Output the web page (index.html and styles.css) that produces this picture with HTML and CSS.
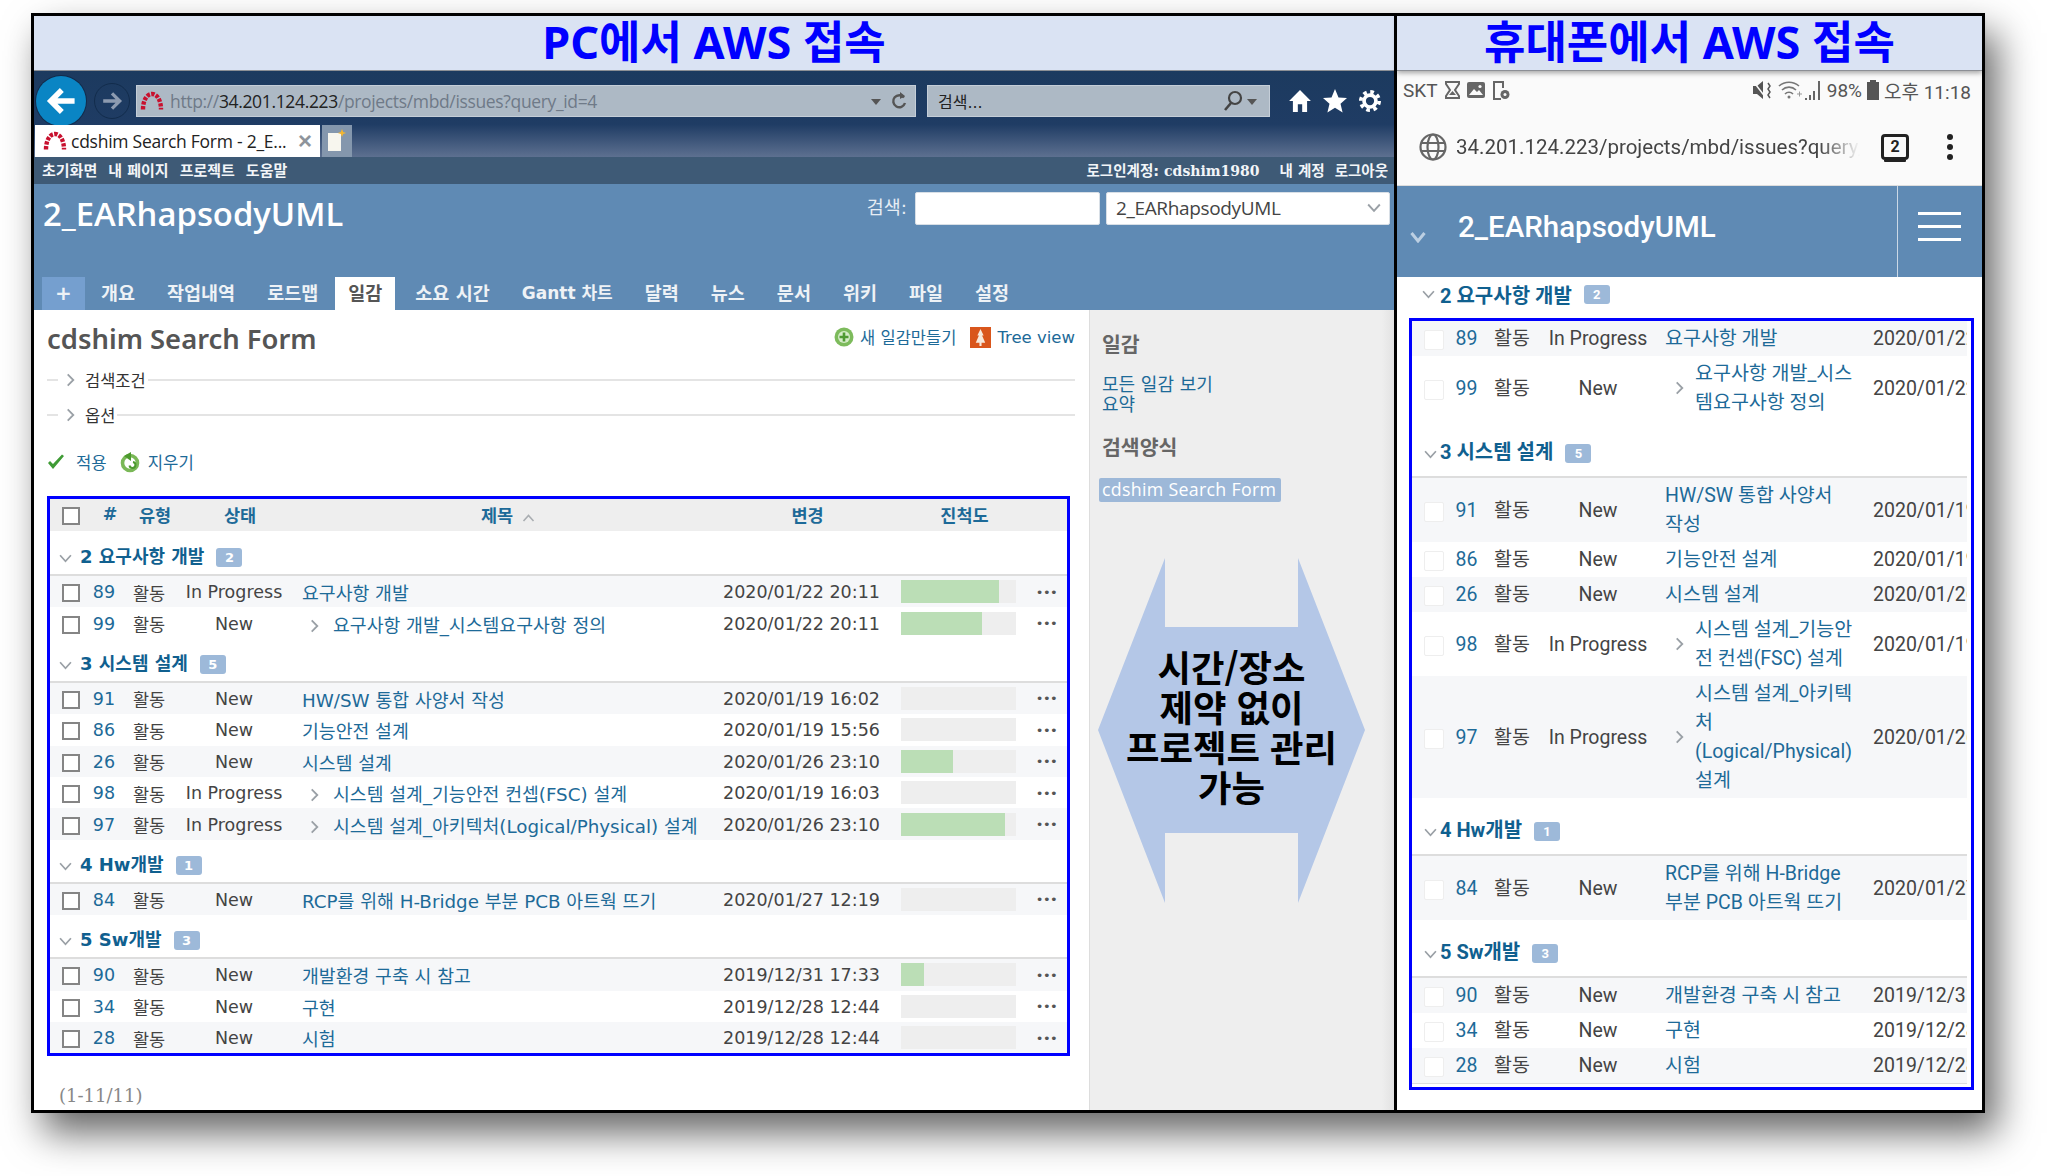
FILE: index.html
```html
<!DOCTYPE html>
<html lang="ko">
<head>
  <meta charset="UTF-8" />
  <title>PC / 휴대폰에서 AWS 접속</title>
  <link rel="stylesheet" href="styles.css">
</head>
<body>

<svg class="defs">
  <symbol id="down" viewBox="0 0 12 8"><path d="M1 1l5 5.5L11 1" fill="none" stroke="#9aa0a6" stroke-width="1.6"/></symbol>
  <symbol id="right" viewBox="0 0 8 12"><path d="M1.5 1L6.5 6l-5 5" fill="none" stroke="#9aa0a6" stroke-width="1.6"/></symbol>
  <symbol id="redmine" viewBox="0 0 24 20"><path d="M3 18.5C3 9 7 3 12 3s9 6 9 15.5" fill="none" stroke="#c8102e" stroke-width="4.4" stroke-dasharray="3.4 1.3"/></symbol>
</svg>

<div class="frame">

  <!-- PC browser -->
  <section class="pc">
    <div class="band">PC에서 AWS 접속</div>

    <div class="chrome">
      <div class="nav-row">
        <span class="back"><svg width="34" height="34" viewBox="0 0 40 40"><path d="M21 7L8 20l13 13M9 20h27" fill="none" stroke="#fff" stroke-width="6.5"/></svg></span>
        <span class="forward"><svg width="22" height="22" viewBox="0 0 40 40"><path d="M20 6l14 14-14 14M32 20H4" fill="none" stroke="#8d9bb0" stroke-width="6"/></svg></span>
        <div class="addr">
          <svg class="fav" width="24" height="20"><use href="#redmine"/></svg>
          <span class="url">http://<b>34.201.124.223</b>/projects/mbd/issues?query_id=4</span>
          <i class="caret"></i>
          <svg width="16" height="20" viewBox="0 0 16 20"><path d="M13 6.5A6 6 0 1 0 14 12" fill="none" stroke="#555" stroke-width="2.4"/><path d="M9 1l5 4-5 3z" fill="#555"/></svg>
        </div>
        <div class="search">
          <span class="search-text">검색...</span>
          <svg width="20" height="22" viewBox="0 0 20 22"><circle cx="12" cy="8" r="6" fill="none" stroke="#444" stroke-width="2.2"/><path d="M8 13l-6 7" stroke="#444" stroke-width="2.6"/></svg>
          <i class="caret"></i>
        </div>
        <div class="tools">
          <svg width="22" height="24" viewBox="0 0 20 22"><path d="M10 1L0 11h3.500v10H8v-7h4v7h4.500V11H20z" fill="#fff"/></svg>
          <svg width="24" height="24" viewBox="0 0 24 24"><path d="M12 0l3.500 8.500 8.500.6-6.500 5.700 2.100 8.700L12 18.800 4.400 23.500l2.100-8.700L0 9.100l8.500-.6z" fill="#fff"/></svg>
          <svg width="22" height="24" viewBox="0 0 24 24"><circle cx="12" cy="12" r="6.500" fill="none" stroke="#fff" stroke-width="4"/><circle cx="12" cy="12" r="10" fill="none" stroke="#fff" stroke-width="4" stroke-dasharray="4 3.850"/></svg>
        </div>
      </div>
      <div class="tab-row">
        <div class="tab">
          <svg width="24" height="20"><use href="#redmine"/></svg>
          <span class="tab-title">cdshim Search Form - 2_E...</span>
          <span class="tab-x">×</span>
        </div>
        <div class="tab-new"><svg width="20" height="24" viewBox="0 0 20 24"><path d="M1 4h13v18H1z" fill="#f7f6ee"/><path d="M15 0l1.200 3 3 1-3 1-1.200 3-1.200-3-3-1 3-1z" fill="#f2b632"/></svg></div>
      </div>
    </div>

    <div class="menubar">
      <div class="menu-group top-left"><span>초기화면</span><span>내 페이지</span><span>프로젝트</span><span>도움말</span></div>
      <div class="menu-group"><span>로그인계정: <b class="user">cdshim1980</b></span><span class="gap">내 계정</span><span>로그아웃</span></div>
    </div>

    <header class="hdr">
      <div class="hdr-top">
        <h1>2_EARhapsodyUML</h1>
        <div class="quick">
          <label>검색:</label>
          <span class="q-input"></span>
          <span class="q-select">2_EARhapsodyUML<svg width="14" height="10"><use href="#down"/></svg></span>
        </div>
      </div>
      <nav class="tabs">
        <a class="plus">+</a><a>개요</a><a>작업내역</a><a>로드맵</a><a class="on">일감</a><a>소요 시간</a><a class="gantt">Gantt 차트</a><a>달력</a><a>뉴스</a><a>문서</a><a>위키</a><a>파일</a><a>설정</a>
      </nav>
    </header>

    <div class="body-row">
      <main class="main">
        <div class="title-row">
          <h2>cdshim Search Form</h2>
          <div class="contextual">
            <svg width="20" height="20" viewBox="0 0 20 20"><circle cx="10" cy="10" r="9.500" fill="#7dbb5c"/><circle cx="10" cy="10" r="6" fill="#d5ecc8"/><path d="M10 5.500v9M5.500 10h9" stroke="#4f9a33" stroke-width="2.600"/></svg>
            <a>새 일감만들기</a>
            <svg class="tree" width="21" height="21" viewBox="0 0 20 20"><path d="M0 0h20v20H0z" fill="#d9561c"/><path d="M10 2l3 6h-1.500l3 7H11v3H9v-3H5.500l3-7H7z" fill="#f7e9dc"/></svg>
            <a>Tree view</a>
          </div>
        </div>

        <div class="fold"><i></i><svg width="9" height="14"><use href="#right"/></svg><span>검색조건</span><hr></div>
        <div class="fold"><i></i><svg width="9" height="14"><use href="#right"/></svg><span>옵션</span><hr></div>

        <div class="actions">
          <svg width="18" height="16" viewBox="0 0 18 16"><path d="M1 9l5 6L17 2l-2-1.500L6 10 3 7z" fill="#3f9b35"/></svg>
          <a>적용</a>
          <svg class="clear" width="20" height="22" viewBox="0 0 20 22"><circle cx="10" cy="12" r="7.500" fill="none" stroke="#7ab857" stroke-width="3.600"/><path d="M11 1v9L4 5z" fill="#4d9a2e"/><path d="M13 11a3 3 0 1 1-3.500 3.500" fill="none" stroke="#4d9a2e" stroke-width="2"/></svg>
          <a>지우기</a>
        </div>

        <div class="box">
          <table class="list">
            <colgroup><col class="w-cb"><col class="w-id"><col class="w-type"><col class="w-status"><col class="w-title"><col class="w-date"><col class="w-bar"><col class="w-more"></colgroup>
            <thead>
              <tr><th class="th-cb"><input type="checkbox" class="cb"></th><th>#</th><th>유형</th><th>상태</th><th class="sort">제목<svg width="13" height="8" viewBox="0 0 12 8"><path d="M1 7l5-5.500L11 7" fill="none" stroke="#a9adb1" stroke-width="1.600"/></svg></th><th>변경</th><th>진척도</th><th></th></tr>
            </thead>
            <tbody>
              <tr class="group first"><td colspan="8"><svg width="13" height="9"><use href="#down"/></svg><b>2 요구사항 개발</b><span class="badge">2</span></td></tr>
              <tr class="odd"><td><input type="checkbox" class="cb"></td><td class="id">89</td><td>활동</td><td>In Progress</td><td class="title"><a>요구사항 개발</a></td><td>2020/01/22 20:11</td><td><div class="bar"><div class="fill" style="width:85%"></div></div></td><td class="more">•••</td></tr>
              <tr><td><input type="checkbox" class="cb"></td><td class="id">99</td><td>활동</td><td>New</td><td class="title sub"><svg width="9" height="14"><use href="#right"/></svg><a>요구사항 개발_시스템요구사항 정의</a></td><td>2020/01/22 20:11</td><td><div class="bar"><div class="fill" style="width:70%"></div></div></td><td class="more">•••</td></tr>

              <tr class="group"><td colspan="8"><svg width="13" height="9"><use href="#down"/></svg><b>3 시스템 설계</b><span class="badge">5</span></td></tr>
              <tr class="odd"><td><input type="checkbox" class="cb"></td><td class="id">91</td><td>활동</td><td>New</td><td class="title"><a>HW/SW 통합 사양서 작성</a></td><td>2020/01/19 16:02</td><td><div class="bar"></div></td><td class="more">•••</td></tr>
              <tr><td><input type="checkbox" class="cb"></td><td class="id">86</td><td>활동</td><td>New</td><td class="title"><a>기능안전 설계</a></td><td>2020/01/19 15:56</td><td><div class="bar"></div></td><td class="more">•••</td></tr>
              <tr class="odd"><td><input type="checkbox" class="cb"></td><td class="id">26</td><td>활동</td><td>New</td><td class="title"><a>시스템 설계</a></td><td>2020/01/26 23:10</td><td><div class="bar"><div class="fill" style="width:45%"></div></div></td><td class="more">•••</td></tr>
              <tr><td><input type="checkbox" class="cb"></td><td class="id">98</td><td>활동</td><td>In Progress</td><td class="title sub"><svg width="9" height="14"><use href="#right"/></svg><a>시스템 설계_기능안전 컨셉(FSC) 설계</a></td><td>2020/01/19 16:03</td><td><div class="bar"></div></td><td class="more">•••</td></tr>
              <tr class="odd"><td><input type="checkbox" class="cb"></td><td class="id">97</td><td>활동</td><td>In Progress</td><td class="title sub"><svg width="9" height="14"><use href="#right"/></svg><a>시스템 설계_아키텍처(Logical/Physical) 설계</a></td><td>2020/01/26 23:10</td><td><div class="bar"><div class="fill" style="width:90%"></div></div></td><td class="more">•••</td></tr>

              <tr class="group"><td colspan="8"><svg width="13" height="9"><use href="#down"/></svg><b>4 Hw개발</b><span class="badge">1</span></td></tr>
              <tr class="odd"><td><input type="checkbox" class="cb"></td><td class="id">84</td><td>활동</td><td>New</td><td class="title"><a>RCP를 위해 H-Bridge 부분 PCB 아트웍 뜨기</a></td><td>2020/01/27 12:19</td><td><div class="bar"></div></td><td class="more">•••</td></tr>

              <tr class="group"><td colspan="8"><svg width="13" height="9"><use href="#down"/></svg><b>5 Sw개발</b><span class="badge">3</span></td></tr>
              <tr class="odd"><td><input type="checkbox" class="cb"></td><td class="id">90</td><td>활동</td><td>New</td><td class="title"><a>개발환경 구축 시 참고</a></td><td>2019/12/31 17:33</td><td><div class="bar"><div class="fill" style="width:20%"></div></div></td><td class="more">•••</td></tr>
              <tr><td><input type="checkbox" class="cb"></td><td class="id">34</td><td>활동</td><td>New</td><td class="title"><a>구현</a></td><td>2019/12/28 12:44</td><td><div class="bar"></div></td><td class="more">•••</td></tr>
              <tr class="odd"><td><input type="checkbox" class="cb"></td><td class="id">28</td><td>활동</td><td>New</td><td class="title"><a>시험</a></td><td>2019/12/28 12:44</td><td><div class="bar"></div></td><td class="more">•••</td></tr>
            </tbody>
          </table>
        </div>

        <div class="pager">(1-11/11)</div>
      </main>

      <aside class="side">
        <h3>일감</h3>
        <a>모든 일감 보기</a>
        <a>요약</a>
        <h3 class="second">검색양식</h3>
        <a class="selected">cdshim Search Form</a>
      </aside>
    </div>

    <!-- callout over the page -->
    <div class="callout">
      <svg width="267" height="345" viewBox="0 0 267 345"><path d="M67 0v69h133V0l67 172-67 173v-70H67v70L0 172z" fill="#b4c7e7"/></svg>
      <p>시간/장소<br>제약 없이<br>프로젝트 관리<br>가능</p>
    </div>
  </section>

  <!-- phone browser -->
  <section class="phone">
    <div class="band">휴대폰에서 AWS 접속</div>

    <div class="statusbar">
      <div class="st-left">
        <span>SKT</span>
        <svg width="15" height="18" viewBox="0 0 15 18"><path d="M1 1h13v2l-4 6 4 6v2H1v-2l4-6-4-6z" fill="none" stroke="#666" stroke-width="2"/><path d="M4 14h7l-3.500-4z" fill="#666"/></svg>
        <svg width="18" height="16" viewBox="0 0 18 16"><rect x="0" y="0" width="18" height="16" rx="2" fill="#666"/><path d="M2 13l5-6 3 3 2-2 4 5z" fill="#fafafa"/><circle cx="13" cy="4.500" r="1.600" fill="#fafafa"/></svg>
        <svg width="18" height="19" viewBox="0 0 18 19"><path d="M9 18H2V1h9v6" fill="none" stroke="#666" stroke-width="2"/><circle cx="13" cy="13.500" r="4.500" fill="#666"/><circle cx="13" cy="13.500" r="1.500" fill="#fafafa"/></svg>
      </div>
      <div class="st-right">
        <svg width="20" height="20" viewBox="0 0 20 20"><path d="M0 6h4l6-5v18l-6-5H0z" fill="#555"/><path d="M0 1l13 17" stroke="#fafafa" stroke-width="1.500"/><path d="M15 3l2 3-2 3 2 3-2 3 2 3" fill="none" stroke="#555" stroke-width="1.500"/></svg>
        <svg width="24" height="20" viewBox="0 0 24 20"><path d="M1 6a15 15 0 0 1 20 0M4 10a10 10 0 0 1 14 0M7 14a5.500 5.500 0 0 1 8 0" fill="none" stroke="#777" stroke-width="1.600"/><circle cx="11" cy="17" r="1.500" fill="#777"/><path d="M19 14h5M21.500 11.500v5" stroke="#999"/></svg>
        <svg class="sig" width="18" height="20" viewBox="0 0 18 20"><path d="M1 18v2h2v-2zM5 15v5h2v-5zM9 11v9h2v-9zM14 1v19h2V1z" fill="#666"/></svg>
        <span>98%</span>
        <svg width="12" height="20" viewBox="0 0 12 20"><path d="M3 0h6v2h3v18H0V2h3z" fill="#555"/></svg>
        <span>오후 11:18</span>
      </div>
    </div>

    <div class="urlbar">
      <svg width="28" height="28" viewBox="0 0 28 28"><g fill="none" stroke="#666" stroke-width="2.200"><circle cx="14" cy="14" r="12.500"/><ellipse cx="14" cy="14" rx="5.500" ry="12.500"/><path d="M2 10h24M2 18h24"/></g></svg>
      <span class="m-url">34.201.124.223/projects/mbd/issues?query_id=4</span>
      <span class="counter">2</span>
      <span class="kebab"><i></i><i></i><i></i></span>
    </div>

    <header class="m-hdr">
      <div class="m-title">
        <svg width="16" height="11" viewBox="0 0 16 11"><path d="M1.500 1l6.500 8 6.500-8" fill="none" stroke="#bccfe2" stroke-width="3"/></svg>
        <h1>2_EARhapsodyUML</h1>
      </div>
      <div class="burger"><i></i><i></i><i></i></div>
    </header>

    <div class="m-body">
      <div class="m-first"><svg width="13" height="9"><use href="#down"/></svg><b>2 요구사항 개발</b><span class="badge">2</span></div>
      <div class="m-box">
        <table class="m-list">
          <colgroup><col class="m-cb"><col class="m-id"><col class="m-type"><col class="m-status"><col class="m-title-col"><col class="m-date"></colgroup>
          <tbody>
            <tr class="odd"><td><span class="m-check"></span></td><td class="id">89</td><td>활동</td><td>In Progress</td><td class="title"><a>요구사항 개발</a></td><td class="date">2020/01/22 20:11</td></tr>
            <tr><td><span class="m-check"></span></td><td class="id">99</td><td>활동</td><td>New</td><td class="title"><div class="m-sub"><svg width="9" height="14"><use href="#right"/></svg><a>요구사항 개발_시스템요구사항 정의</a></div></td><td class="date">2020/01/22 20:11</td></tr>

            <tr class="group"><td colspan="6"><svg width="13" height="9"><use href="#down"/></svg><b>3 시스템 설계</b><span class="badge">5</span></td></tr>
            <tr class="odd"><td><span class="m-check"></span></td><td class="id">91</td><td>활동</td><td>New</td><td class="title"><a>HW/SW 통합 사양서 작성</a></td><td class="date">2020/01/19 16:02</td></tr>
            <tr><td><span class="m-check"></span></td><td class="id">86</td><td>활동</td><td>New</td><td class="title"><a>기능안전 설계</a></td><td class="date">2020/01/19 15:56</td></tr>
            <tr class="odd"><td><span class="m-check"></span></td><td class="id">26</td><td>활동</td><td>New</td><td class="title"><a>시스템 설계</a></td><td class="date">2020/01/26 23:10</td></tr>
            <tr><td><span class="m-check"></span></td><td class="id">98</td><td>활동</td><td>In Progress</td><td class="title"><div class="m-sub"><svg width="9" height="14"><use href="#right"/></svg><a>시스템 설계_기능안전 컨셉(FSC) 설계</a></div></td><td class="date">2020/01/19 16:03</td></tr>
            <tr class="odd"><td><span class="m-check"></span></td><td class="id">97</td><td>활동</td><td>In Progress</td><td class="title"><div class="m-sub"><svg width="9" height="14"><use href="#right"/></svg><a>시스템 설계_아키텍처(Logical/Physical) 설계</a></div></td><td class="date">2020/01/26 23:10</td></tr>

            <tr class="group"><td colspan="6"><svg width="13" height="9"><use href="#down"/></svg><b>4 Hw개발</b><span class="badge">1</span></td></tr>
            <tr class="odd"><td><span class="m-check"></span></td><td class="id">84</td><td>활동</td><td>New</td><td class="title"><a>RCP를 위해 H-Bridge 부분 PCB 아트웍 뜨기</a></td><td class="date">2020/01/27 12:19</td></tr>

            <tr class="group"><td colspan="6"><svg width="13" height="9"><use href="#down"/></svg><b>5 Sw개발</b><span class="badge">3</span></td></tr>
            <tr class="odd"><td><span class="m-check"></span></td><td class="id">90</td><td>활동</td><td>New</td><td class="title"><a>개발환경 구축 시 참고</a></td><td class="date">2019/12/31 17:33</td></tr>
            <tr><td><span class="m-check"></span></td><td class="id">34</td><td>활동</td><td>New</td><td class="title"><a>구현</a></td><td class="date">2019/12/28 12:44</td></tr>
            <tr class="odd last"><td><span class="m-check"></span></td><td class="id">28</td><td>활동</td><td>New</td><td class="title"><a>시험</a></td><td class="date">2019/12/28 12:44</td></tr>
          </tbody>
        </table>
      </div>
    </div>
  </section>
</div>

</body>
</html>
```

FILE: styles.css
```css
:root {
  --blue: #5f8ab4;
  --link: #1d6a98;
  --badge: #9db9d9;
  --ko: "Noto Sans CJK KR";
}

html, body {
  margin: 0;
  padding: 0;
  background: #fff;
}

body {
  width: 2047px;
  height: 1176px;
  overflow: hidden;
  font-family: "DejaVu Sans", var(--ko), sans-serif;
  color: #333;
}

.defs {
  display: none;
}

.frame {
  box-sizing: border-box;
  width: 1954px;
  height: 1100px;
  margin: 13px 0 0 31px;
  border: 3px solid #000;
  display: flex;
  box-shadow: 12px 20px 36px rgba(0,0,0,0.6);
  background: #fff;
}

.pc {
  width: 1360px;
  display: flex;
  flex-direction: column;
  position: relative;
}

.phone {
  flex: 1;
  min-width: 0;
  border-left: 3px solid #000;
  display: flex;
  flex-direction: column;
}

.band {
  height: 55px;
  flex: none;
  background: #dae3f3;
  color: #00f;
  font: 700 45px/52px "Noto Sans", var(--ko), sans-serif;
  text-align: center;
  border-bottom: 1px solid #8c8f95;
  box-sizing: border-box;
}

/* IE chrome */
.chrome {
  height: 86px;
  flex: none;
  display: flex;
  flex-direction: column;
  background: linear-gradient(#1c3a5f 0, #1f3c64 62%, #5d7090 100%);
}

.nav-row {
  height: 54px;
  padding: 6px 0 0 2px;
  box-sizing: border-box;
  display: flex;
  align-items: center;
}

.back {
  flex: none;
  width: 50px;
  height: 50px;
  border-radius: 50%;
  background: #0a85c4;
  box-shadow: 0 0 0 1px #122c4c;
  display: flex;
  align-items: center;
  justify-content: center;
}

.forward {
  flex: none;
  width: 34px;
  height: 34px;
  margin-left: 8px;
  border-radius: 50%;
  border: 1px solid #122c4c;
  display: flex;
  align-items: center;
  justify-content: center;
}

.addr, .search {
  height: 32px;
  box-sizing: border-box;
  background: #adb9c5;
  border: 1px solid #c5ced8;
  display: flex;
  align-items: center;
  flex: none;
}

.addr {
  width: 780px;
  margin-left: 6px;
  padding: 0 8px 0 3px;
  gap: 6px;
}

.url {
  flex: 1;
  font: 17.5px "Open Sans", sans-serif;
  letter-spacing: -0.35px;
  color: #6f7a88;
}

.url b {
  font-weight: 400;
  color: #222;
}

.caret {
  width: 0;
  height: 0;
  border: 5px solid transparent;
  border-top: 6px solid #555;
  border-bottom: 0;
  margin: 2px 4px 0;
}

.search {
  width: 343px;
  margin-left: 11px;
  padding: 0 8px 0 10px;
}

.search-text {
  flex: 1;
  font-size: 16px;
  color: #222;
}

.tools {
  display: flex;
  align-items: center;
  gap: 12px;
  margin-left: 19px;
}

.tab-row {
  height: 32px;
  display: flex;
}

.tab {
  width: 285px;
  margin-left: 1px;
  background: #fff;
  display: flex;
  align-items: center;
  padding: 0 6px 0 8px;
  box-sizing: border-box;
  gap: 4px;
}

.tab-title {
  flex: 1;
  font: 17.5px "Open Sans", sans-serif;
  letter-spacing: -0.25px;
  color: #222;
  white-space: nowrap;
}

.tab-x {
  font: 700 24px/24px "Liberation Sans", sans-serif;
  color: #8e949b;
  margin-right: 2px;
}

.tab-new {
  width: 30px;
  margin-left: 2px;
  background: #8497ad;
  display: flex;
  align-items: center;
  justify-content: center;
}

.menubar {
  height: 27px;
  flex: none;
  box-sizing: border-box;
  background: #3e5a76;
  color: #f2f5f8;
  font-size: 14.5px;
  font-weight: 700;
  display: flex;
  justify-content: space-between;
  align-items: center;
  padding: 0 6px 3px 8px;
}

.menu-group {
  display: flex;
  gap: 10px;
}

.top-left {
  font-size: 15px;
  gap: 11px;
}

.menu-group .gap {
  margin-left: 10px;
}

.user {
  font-family: "DejaVu Serif", serif;
  font-size: 14px;
}

/* redmine header */
.hdr {
  height: 126px;
  flex: none;
  box-sizing: border-box;
  background: var(--blue);
  display: flex;
  flex-direction: column;
  justify-content: space-between;
}

.hdr-top {
  display: flex;
  justify-content: space-between;
  padding: 7px 4px 0 9px;
}

h1 {
  margin: 0;
  color: #fff;
  font: 600 32.8px/46px "Open Sans", sans-serif;
  letter-spacing: 0;
}

.quick {
  display: flex;
  align-items: flex-start;
  gap: 6px;
  padding-top: 1px;
}

.quick label {
  color: #e6edf4;
  font-size: 18.5px;
  line-height: 31px;
  margin-right: 2px;
}

.q-input, .q-select {
  height: 33px;
  box-sizing: border-box;
  background: #fff;
  border: 1px solid #d8dfe6;
  border-radius: 2px;
}

.q-input {
  width: 185px;
}

.q-select {
  width: 284px;
  padding: 0 8px 2px 9px;
  display: flex;
  align-items: center;
  justify-content: space-between;
  font: 19px "Open Sans", sans-serif;
  letter-spacing: -0.35px;
  color: #444;
}

.tabs {
  display: flex;
  height: 33px;
  padding-left: 8px;
  color: #eef2f6;
  font-size: 18.5px;
  font-weight: 700;
  line-height: 33px;
}

.tabs a {
  padding: 0 16px;
}

.tabs .gantt {
  font-size: 17px;
}

.tabs .plus {
  width: 43px;
  padding: 0;
  text-align: center;
  background: #759fcf;
  font-size: 20px;
}

.tabs .on {
  background: #fff;
  color: #555;
  margin: 0 4px 0 1px;
  padding: 0 13px;
}

/* page body */
.body-row {
  flex: 1;
  display: flex;
  min-height: 0;
}

.main {
  flex: 1;
  min-width: 0;
  padding: 0 14px 0 13px;
}

.title-row {
  height: 52px;
  box-sizing: border-box;
  padding-top: 5px;
  display: flex;
  justify-content: space-between;
  align-items: center;
}

h2 {
  margin: 0;
  font: 600 27.4px "Noto Sans", sans-serif;
  color: #555;
}

.contextual {
  display: flex;
  align-items: center;
  gap: 6px;
  color: var(--link);
  font-size: 16.5px;
  margin-top: -3px;
}

.contextual .tree {
  margin-left: 8px;
}

.fold {
  height: 35px;
  display: flex;
  align-items: center;
  font-size: 16.5px;
  color: #333;
}

.fold i {
  width: 11px;
  height: 2px;
  background: #e4e4e4;
  margin-right: 8px;
}

.fold span {
  margin: 0 2px 0 10px;
}

.fold hr {
  flex: 1;
  margin: 0;
  border: 0;
  height: 2px;
  background: #e4e4e4;
}

.actions {
  height: 36px;
  margin-top: 13px;
  padding-bottom: 2px;
  box-sizing: border-box;
  display: flex;
  align-items: center;
  color: var(--link);
  font-size: 16.7px;
  gap: 11px;
}

.actions .clear {
  margin-left: 2px;
  margin-right: -3px;
}

.box {
  width: 1023px;
  box-sizing: border-box;
  margin-top: 15px;
  border: 3px solid #00f;
}

table {
  border-spacing: 0;
  table-layout: fixed;
}

.list {
  width: 1017px;
  font-size: 17.5px;
  color: #444;
}

.w-cb { width: 36px; }
.w-id { width: 36px; }
.w-type { width: 54px; }
.w-status { width: 116px; }
.w-title { width: 420px; }
.w-date { width: 179px; }
.w-bar { width: 135px; }
.w-more { width: 41px; }

.list th {
  height: 32px;
  padding: 0 0 2px 12px;
  box-sizing: border-box;
  background: #eee;
  color: var(--link);
  font-size: 17.5px;
  font-weight: 700;
}

.list .th-cb {
  padding: 0;
}

.list th svg {
  margin-left: 9px;
}

.list td {
  padding: 1px 0 0;
  text-align: center;
  white-space: nowrap;
}

.list tbody tr {
  height: 31.4px;
}

.list tr.group {
  height: 44px;
}

.list tr.first {
  height: 45px;
}

.list .group td {
  text-align: left;
  padding: 4px 0 0 9px;
  border-bottom: 2px solid #ddd;
}

.list .group svg {
  margin-right: 8px;
}

.group b, .m-first b {
  color: #10608f;
  font-size: 18px;
}

.odd {
  background: #f6f7f9;
}

.cb {
  appearance: none;
  display: block;
  box-sizing: border-box;
  width: 18px;
  height: 18px;
  margin: 2px 0 0 12px;
  background: #fff;
  border: 2px solid #858585;
}

.id {
  color: var(--link);
}

.list .title {
  text-align: left;
  padding-left: 10px;
  color: var(--link);
  font-size: 18.3px;
}

.list .sub svg {
  margin: 0 14px 0 8px;
  vertical-align: -1px;
}

.bar {
  width: 115px;
  height: 23px;
  margin: -1px 0 0 10px;
  background: #eee;
}

.fill {
  height: 100%;
  background: #bbdeb6;
}

.more {
  font-size: 13px;
  letter-spacing: -0.5px;
  color: #555;
}

.badge {
  display: inline-block;
  margin-left: 12px;
  min-width: 26px;
  height: 19px;
  border-radius: 3px;
  background: var(--badge);
  color: #fff;
  font-size: 13px;
  font-weight: 700;
  line-height: 19px;
  text-align: center;
  vertical-align: 1px;
}

.pager {
  margin: 29px 0 0 12px;
  font: 18px/22px "DejaVu Serif", serif;
  color: #888;
}

/* sidebar */
.side {
  width: 305px;
  flex: none;
  box-sizing: border-box;
  background: linear-gradient(90deg, #eee 0, #eee 96%, #e2e2e2 100%);
  border-left: 1px solid #ddd;
  padding: 20px 0 0 12px;
  color: var(--link);
  font-size: 18px;
  line-height: 19.5px;
}

.side a {
  display: block;
}

.side h3 {
  margin: 0 0 15px;
  font-size: 20.5px;
  line-height: 30px;
  color: #666;
  font-weight: 700;
}

.side .second {
  margin: 19px 0 15px;
}

.side .selected {
  width: 182px;
  margin-left: -3px;
  padding-left: 3px;
  box-sizing: border-box;
  height: 24px;
  background: #9db8d8;
  color: #fff;
  border-radius: 2px;
  font: 17.8px/23px "Open Sans", sans-serif;
  letter-spacing: 0.3px;
}

.callout {
  position: absolute;
  left: 1064px;
  top: 542px;
  width: 267px;
  height: 345px;
}

.callout svg {
  display: block;
}

.callout p {
  position: absolute;
  inset: 0 0 10px 0;
  margin: 0;
  display: flex;
  align-items: center;
  justify-content: center;
  text-align: center;
  font: 700 36.4px/40px var(--ko), sans-serif;
  color: #000;
}

/* phone */
.phone .band {
  box-shadow: 0 2px 5px rgba(0,0,0,0.35);
  position: relative;
}

.statusbar, .urlbar {
  background: #fafafa;
  flex: none;
  display: flex;
  align-items: center;
  font-family: Roboto, var(--ko), sans-serif;
}

.statusbar {
  height: 38px;
  justify-content: space-between;
  padding: 0 11px 0 6px;
  color: #555;
  font-size: 19px;
}

.st-left, .st-right {
  display: flex;
  align-items: center;
  gap: 7px;
}

.st-right {
  gap: 5px;
}

.sig {
  margin-left: -3px;
}

.urlbar {
  height: 77px;
  padding-left: 22px;
  gap: 9px;
  border-bottom: 1px solid #ddd;
  box-sizing: border-box;
}

.m-url {
  width: 404px;
  overflow: hidden;
  white-space: nowrap;
  font-size: 20.5px;
  color: #444;
  -webkit-mask-image: linear-gradient(90deg, #000 90%, transparent 100%);
  mask-image: linear-gradient(90deg, #000 90%, transparent 100%);
}

.counter {
  width: 28px;
  height: 26px;
  margin-left: 12px;
  box-sizing: border-box;
  border: 3px solid #222;
  border-radius: 4px;
  text-align: center;
  font-size: 16px;
  font-weight: 700;
  line-height: 20px;
  color: #222;
  box-shadow: 0 5px 0 -3px #222;
}

.kebab {
  margin-left: 29px;
  display: flex;
  flex-direction: column;
  gap: 4px;
}

.kebab i {
  width: 6px;
  height: 6px;
  border-radius: 50%;
  background: #222;
}

.m-hdr {
  height: 91px;
  flex: none;
  background: var(--blue);
  display: flex;
}

.m-title {
  flex: 1;
  display: flex;
  align-items: center;
  padding-left: 13px;
}

.m-title svg {
  margin-top: 12px;
}

.m-title h1 {
  margin: -9px 0 0 32px;
  font: 500 29.5px/40px Roboto, sans-serif;
}

.burger {
  width: 85px;
  border-left: 1px solid #cbd8e6;
  display: flex;
  flex-direction: column;
  gap: 10px;
  padding: 26px 0 0 20px;
  box-sizing: border-box;
}

.burger i {
  width: 43px;
  height: 3px;
  background: #fff;
}

.m-body {
  flex: 1;
  background: #fff;
  font-family: Roboto, var(--ko), sans-serif;
}

.m-first {
  height: 41px;
  display: flex;
  align-items: center;
  padding: 0 0 6px 25px;
  box-sizing: border-box;
}

.m-first svg {
  margin-right: 5px;
}

.m-first b {
  font-size: 20px;
}

.m-box {
  width: 565px;
  height: 772px;
  margin-left: 12px;
  box-sizing: border-box;
  border: 3px solid #00f;
}

.m-list {
  width: 555px;
  font-size: 19.5px;
  line-height: 29px;
  color: #444;
}

.m-cb { width: 38px; }
.m-id { width: 33px; }
.m-type { width: 58px; }
.m-status { width: 114px; }
.m-title-col { width: 208px; }
.m-date { width: 104px; }

.m-list td {
  padding: 3px 0;
  text-align: center;
  white-space: nowrap;
}

.m-list .title {
  padding-left: 10px;
  padding-right: 10px;
  text-align: left;
  white-space: normal;
  color: var(--link);
}

.m-list .date {
  padding-left: 10px;
  text-align: left;
  overflow: hidden;
}

.m-sub {
  display: flex;
  align-items: center;
  margin-right: -10px;
}

.m-sub svg {
  flex: none;
  margin: 0 11px 0 10px;
}

.m-check {
  display: block;
  width: 20px;
  height: 20px;
  margin: 3px 0 0 12px;
  background: #fff;
  border: 1px solid #eee;
  box-sizing: border-box;
  border-radius: 2px;
}

.m-list tr.group {
  height: 58px;
}

.m-list .group td {
  text-align: left;
  padding: 9px 0 0 12px;
  border-bottom: 2px solid #ddd;
}

.m-list .group svg {
  margin-right: 3px;
}

.m-list .group b {
  font-size: 20px;
}

.m-list .last td {
  border-bottom: 1px solid #ddd;
}
```
